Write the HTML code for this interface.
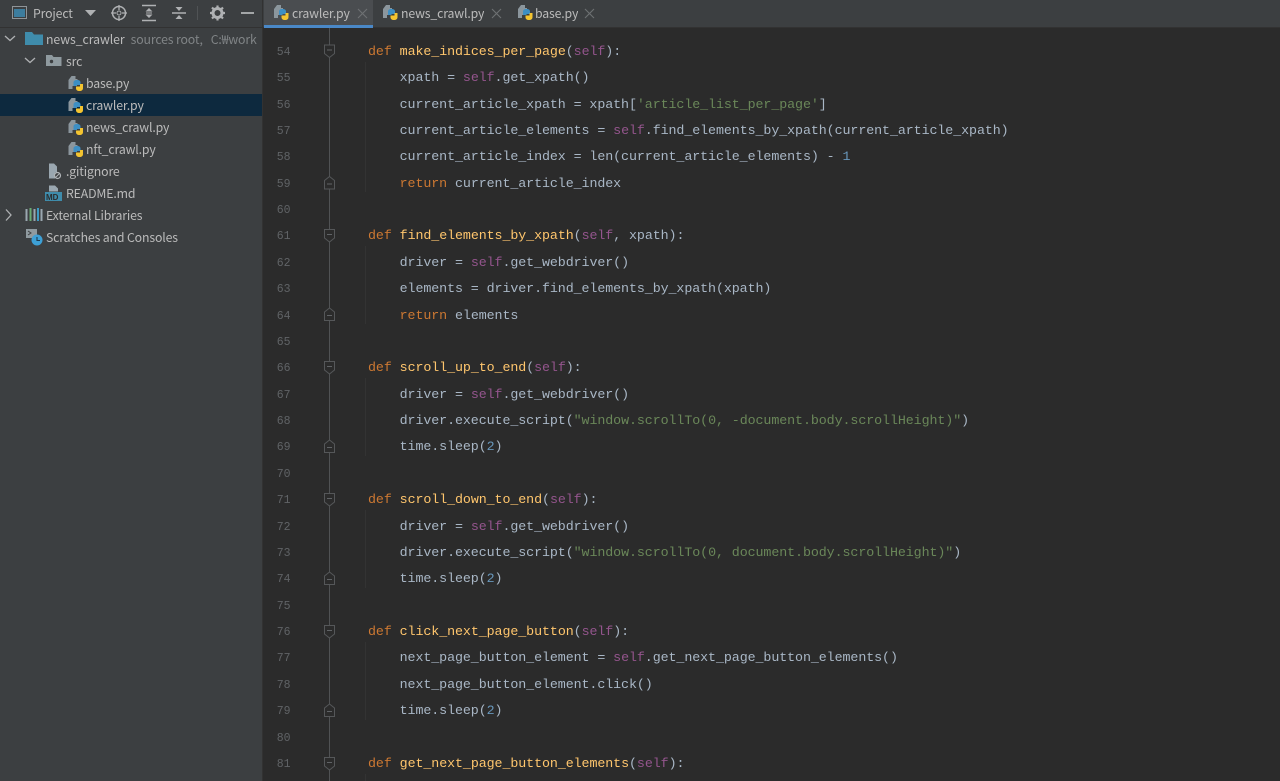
<!DOCTYPE html>
<html><head><meta charset="utf-8"><style>
html,body{margin:0;padding:0;background:#2b2b2b}
#r{position:relative;width:1280px;height:781px;overflow:hidden;background:#2b2b2b}
#side{position:absolute;left:0;top:0;width:262px;height:781px;background:#3c3f41;border-right:1px solid #323232}
.t{position:absolute;font:12.3px/22px "Noto Sans CJK KR","Liberation Sans",sans-serif;letter-spacing:-0.15px;color:#bbbbbb;white-space:nowrap;overflow:hidden}
.g{color:#808486}
#sel{position:absolute;left:0;top:94px;width:262px;height:22px;background:#0d293e}
#tabs{position:absolute;left:263px;top:0;width:1017px;height:27px;background:#3c3f41;border-bottom:1px solid #323232}
#act{position:absolute;left:264px;top:0;width:109px;height:25px;background:#4a4d50}
#ul{position:absolute;left:264px;top:25px;width:109px;height:3px;background:#4a88c7}
svg{position:absolute;left:0;top:0}
pre{position:absolute;margin:0;font:13.33px/26.37px "Liberation Mono",monospace;color:#a9b7c6}
#code{left:368px;top:39.8px;letter-spacing:-0.09px}
#nums{left:263px;top:39.8px;width:27.5px;text-align:right;color:#606366;font-size:11.5px}
i{font-style:normal}.k{color:#cc7832}.f{color:#ffc66d}.s{color:#94558d}.q{color:#6a8759}.n{color:#6897bb}
</style></head><body><div id="r">
<pre id="nums">54
55
56
57
58
59
60
61
62
63
64
65
66
67
68
69
70
71
72
73
74
75
76
77
78
79
80
81</pre>
<pre id="code"><i class="k">def</i> <i class="f">make_indices_per_page</i>(<i class="s">self</i>):
    xpath = <i class="s">self</i>.get_xpath()
    current_article_xpath = xpath[<i class="q">'article_list_per_page'</i>]
    current_article_elements = <i class="s">self</i>.find_elements_by_xpath(current_article_xpath)
    current_article_index = len(current_article_elements) - <i class="n">1</i>
    <i class="k">return</i> current_article_index

<i class="k">def</i> <i class="f">find_elements_by_xpath</i>(<i class="s">self</i>, xpath):
    driver = <i class="s">self</i>.get_webdriver()
    elements = driver.find_elements_by_xpath(xpath)
    <i class="k">return</i> elements

<i class="k">def</i> <i class="f">scroll_up_to_end</i>(<i class="s">self</i>):
    driver = <i class="s">self</i>.get_webdriver()
    driver.execute_script(<i class="q">"window.scrollTo(0, -document.body.scrollHeight)"</i>)
    time.sleep(<i class="n">2</i>)

<i class="k">def</i> <i class="f">scroll_down_to_end</i>(<i class="s">self</i>):
    driver = <i class="s">self</i>.get_webdriver()
    driver.execute_script(<i class="q">"window.scrollTo(0, document.body.scrollHeight)"</i>)
    time.sleep(<i class="n">2</i>)

<i class="k">def</i> <i class="f">click_next_page_button</i>(<i class="s">self</i>):
    next_page_button_element = <i class="s">self</i>.get_next_page_button_elements()
    next_page_button_element.click()
    time.sleep(<i class="n">2</i>)

<i class="k">def</i> <i class="f">get_next_page_button_elements</i>(<i class="s">self</i>):</pre>
<svg width="1280" height="781" fill="none">
<defs>
<g id="fold"><path d="M-5-6h10v8.500l-5 4l-5-4z" fill="#2b2b2b" stroke="#555759"/><path d="M-2.500-1h5" stroke="#606366"/></g>
<g id="foldu"><path d="M-5 6h10v-8.500l-5-4l-5 4z" fill="#2b2b2b" stroke="#555759"/><path d="M-2.500 1h5" stroke="#606366"/></g>
</defs>
<path d="M329.500 28V781" stroke="#505254"/>
<path d="M365.500 62V192M365.500 246V324M365.500 378V456M365.500 510V588M365.500 642V720M365.500 774V781" stroke="#333333"/>
<use href="#fold" x="329.500" y="51"/><use href="#foldu" x="329.500" y="183"/>
<use href="#fold" x="329.500" y="235.500"/><use href="#foldu" x="329.500" y="314.500"/>
<use href="#fold" x="329.500" y="367.500"/><use href="#foldu" x="329.500" y="446.500"/>
<use href="#fold" x="329.500" y="499.500"/><use href="#foldu" x="329.500" y="578.500"/>
<use href="#fold" x="329.500" y="631.500"/><use href="#foldu" x="329.500" y="710.500"/>
<use href="#fold" x="329.500" y="763.500"/>
</svg>
<div id="side"></div><div id="sel"></div>
<div id="tabs"></div><div id="act"></div><div id="ul"></div>
<div style="position:absolute;left:0;top:27px;width:262px;height:1px;background:#323232"></div>
<div class="t" style="left:33px;top:2px">Project</div>
<div class="t" style="left:46px;top:28px;width:216px"><span style="letter-spacing:-0.07px">news_crawler</span><span class="g" style="margin-left:6px">sources root,<span style="margin-left:8px">C:₩work</span></span></div>
<div class="t" style="left:66px;top:50px">src</div>
<div class="t" style="left:86px;top:72px">base.py</div>
<div class="t" style="left:86px;top:94px">crawler.py</div>
<div class="t" style="left:86px;top:116px">news_crawl.py</div>
<div class="t" style="left:86px;top:138px">nft_crawl.py</div>
<div class="t" style="left:66px;top:160px">.gitignore</div>
<div class="t" style="left:66px;top:182px">README.md</div>
<div class="t" style="left:46px;top:204px">External Libraries</div>
<div class="t" style="left:46px;top:226px">Scratches and Consoles</div>
<div class="t" style="left:292px;top:2px">crawler.py</div>
<div class="t" style="left:401px;top:2px">news_crawl.py</div>
<div class="t" style="left:535px;top:2px">base.py</div>
<svg width="1280" height="781" fill="none">
<defs>
<g id="py">
<path d="M3 0h4v3h2v3H6v4H4v3H0V4z" fill="#8b969d"/>
<path d="M5 6.500c0-1.500 1.200-2.500 3.500-2.500s3.500 .8 3.500 2.500v2.500H8.500v1H5z" fill="#3d8fc4"/>
<path d="M14.500 8v4c0 2-1.300 3-3.500 3s-3.500-1-3.500-3v-1.500h4V8z" fill="#f4c430"/>
</g>
<g id="x"><path d="M0 0l9 9M9 0l-9 9" stroke="#6e7173" stroke-width="1.100"/></g>
</defs>
<rect x="12.500" y="6.500" width="14" height="12" stroke="#8f9498" fill="#3c3f41"/><rect x="14" y="9" width="11" height="8" fill="#3d7d9e"/>
<path d="M85 10h11l-5.500 6z" fill="#afb1b3"/>
<circle cx="119" cy="13" r="6.500" stroke="#afb1b3" stroke-width="1.500"/><circle cx="119" cy="13" r="2" stroke="#afb1b3"/><path d="M119 5v5M119 16v5M111 13h5M122 13h5" stroke="#afb1b3" stroke-width="1.300"/>
<path d="M142 5.500h14M142 20.500h14" stroke="#afb1b3" stroke-width="1.500"/><path d="M149 8l-3.500 3.500h7zM149 18l-3.500-3.500h7z" fill="#afb1b3"/><path d="M146 13h6" stroke="#afb1b3"/>
<path d="M172 13h14" stroke="#afb1b3" stroke-width="1.500"/><path d="M179 11l-3.500-4h7zM179 15l-3.500 4h7z" fill="#afb1b3"/>
<path d="M197.500 6v14" stroke="#505355"/>
<circle cx="217.500" cy="13" r="4.500" stroke="#afb1b3" stroke-width="3"/><path d="M217.500 5.500v3M217.500 17.500v3M210 13h3M222 13h3M212 7.500l2 2M221 16.500l2 2M223 7.500l-2 2M214 16.500l-2 2" stroke="#afb1b3" stroke-width="2.200"/>
<path d="M241 13h13" stroke="#afb1b3" stroke-width="1.800"/>
<path d="M5 36l5 4.500l5-4.500" stroke="#afb1b3" stroke-width="1.300"/>
<path d="M25 32h7l2 2.500h9v10.500h-18z" fill="#3f8cab"/>
<path d="M25 58l5 4.500l5-4.500" stroke="#afb1b3" stroke-width="1.300"/>
<path d="M46 55h6l1.500 2h8v9h-15.500z" fill="#8f9a9f"/><circle cx="51.500" cy="61.500" r="1.700" fill="#3c3f41"/>
<use href="#py" x="68.500" y="76"/><use href="#py" x="68.500" y="98"/><use href="#py" x="68.500" y="120"/><use href="#py" x="68.500" y="142"/>
<path d="M49 163.500h5l3 3v6h-2v6h-6z" fill="#9aa7b0"/><circle cx="57.500" cy="175.500" r="3" stroke="#b0b4b7" stroke-width="1.200"/><path d="M55.500 177.500l4-4" stroke="#b0b4b7"/>
<path d="M49 185.500h6l3 3v3h-9z" fill="#9aa7b0"/><rect x="45" y="192" width="17" height="9" fill="#3f8cab"/><text x="46" y="200" font-family="Liberation Sans" font-size="8" font-weight="bold" fill="#2b2b2b">MD</text>
<path d="M5 209.500l5 5.500l-5 5.500" stroke="#afb1b3" stroke-width="1.300" transform="translate(1 0)"/>
<path d="M26.500 209v12" stroke="#9aa7b0" stroke-width="2"/><path d="M30.500 208v13" stroke="#6aab73" stroke-width="2"/><path d="M34.500 209v12" stroke="#9aa7b0" stroke-width="2"/><path d="M38 208v13" stroke="#3d9bc4" stroke-width="2"/><path d="M41.500 209v12" stroke="#9aa7b0" stroke-width="2"/>
<rect x="26" y="229" width="11" height="9" fill="#8f9a9f"/><path d="M28 231l3 2l-3 2" stroke="#3c3f41"/>
<circle cx="37" cy="240" r="5.500" fill="#3da0d6"/><path d="M37 237v3.500h3" stroke="#1d3a4d" stroke-width="1.100"/>
<use href="#py" x="274" y="5"/><use href="#py" x="383" y="5"/><use href="#py" x="518" y="5"/>
<use href="#x" x="358" y="9"/><use href="#x" x="492" y="9"/><use href="#x" x="585" y="9"/>
</svg>
</div></body></html>
